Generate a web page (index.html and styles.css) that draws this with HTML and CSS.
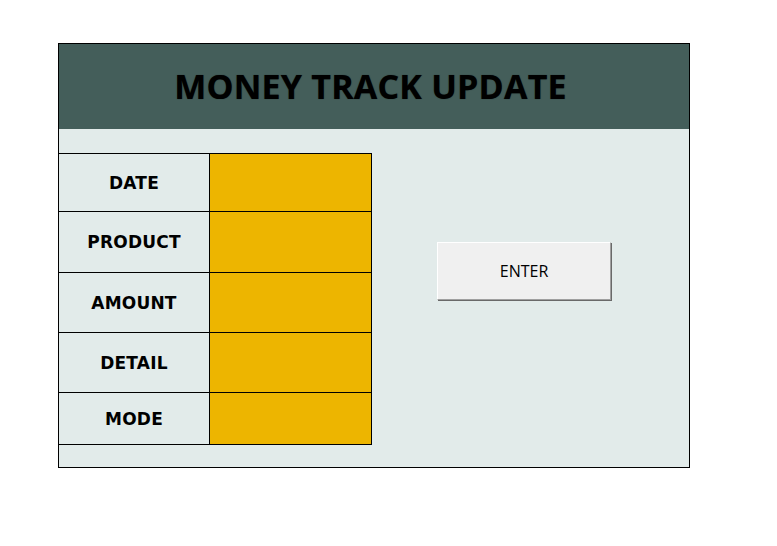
FILE: index.html
```html
<!DOCTYPE html>
<html>
<head>
<meta charset="utf-8">
<link rel="stylesheet" href="styles.css">
</head>
<body>
<div class="panel">
  <div class="header"><h1 class="title">MONEY TRACK UPDATE</h1></div>
  <div class="body">
    <div class="form">
      <div class="row r1"><div class="label">DATE</div><div class="value"></div></div>
      <div class="row r2"><div class="label">PRODUCT</div><div class="value"></div></div>
      <div class="row r3"><div class="label">AMOUNT</div><div class="value"></div></div>
      <div class="row r4"><div class="label">DETAIL</div><div class="value"></div></div>
      <div class="row r5"><div class="label">MODE</div><div class="value"></div></div>
    </div>
    <div class="button">ENTER</div>
  </div>
</div>
</body>
</html>
```
FILE: styles.css
```css
html, body {
  margin: 0;
  padding: 0;
  background: #ffffff;
}
.panel {
  margin: 43px 0 0 58px;
  width: 630px;
  height: 423px;
  border: 1px solid #000;
  background: #e2ebea;
  display: flex;
  flex-direction: column;
}
.header {
  height: 85px;
  background: #445e5a;
  display: flex;
  align-items: center;
  justify-content: center;
}
.title {
  margin: -2px 0 0 -7px;
  font-family: "Open Sans", sans-serif;
  font-weight: 700;
  font-size: 34px;
  color: #000;
  letter-spacing: 0.2px;
  text-shadow: 0 0 1px rgba(0,0,0,0.6);
}
.body {
  display: flex;
  align-items: flex-start;
  padding-top: 24px;
}
.form {
  display: flex;
  flex-direction: column;
  border-bottom: 1px solid #000;
}
.row {
  display: flex;
  border-top: 1px solid #000;
}
.r1 { height: 57px; }
.r2 { height: 60px; }
.r3 { height: 59px; }
.r4 { height: 59px; }
.r5 { height: 51px; }
.label {
  width: 150px;
  border-right: 1px solid #000;
  display: flex;
  align-items: center;
  justify-content: center;
  font-family: "DejaVu Sans", Verdana, sans-serif;
  font-weight: 700;
  font-size: 17px;
  letter-spacing: 0.2px;
  color: #000;
}
.value {
  width: 161px;
  background: #edb500;
  border-right: 1px solid #000;
}
.button {
  margin: 89px 0 0 65px;
  width: 174px;
  height: 58px;
  box-sizing: border-box;
  background: #f0f0f0;
  border-top: 1px solid #ffffff;
  border-left: 1px solid #ffffff;
  border-right: 1px solid #a0a0a0;
  border-bottom: 1px solid #a0a0a0;
  box-shadow: 1px 1px 0 #696969;
  display: flex;
  align-items: center;
  justify-content: center;
  font-family: "Open Sans", sans-serif;
  font-size: 16px;
  color: #000;
}
```
